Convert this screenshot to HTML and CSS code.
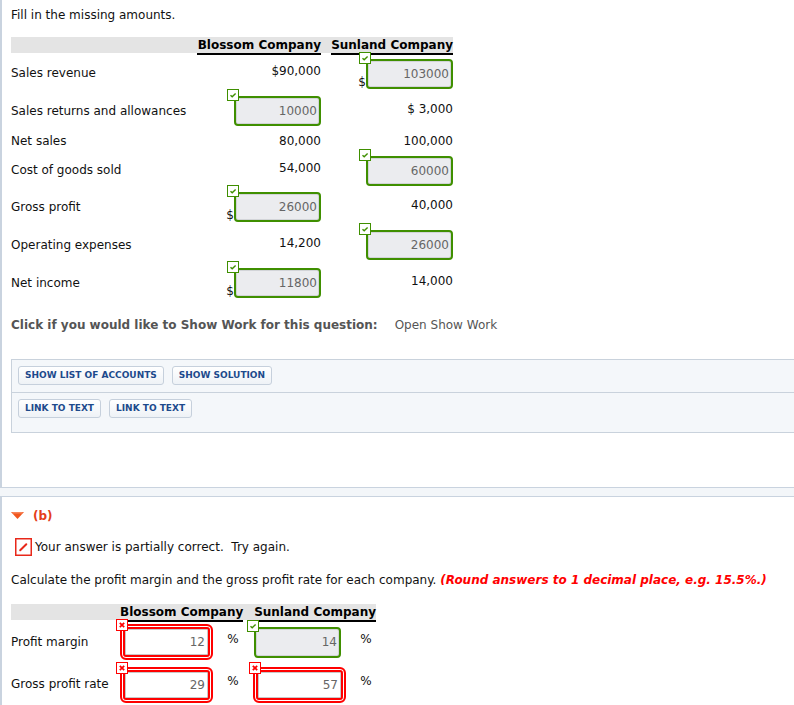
FILE: index.html
```html
<!DOCTYPE html>
<html>
<head>
<meta charset="utf-8">
<title>Fill in the missing amounts</title>
<link rel="stylesheet" href="styles.css">
</head>
<body>
<div class="part part-a">
  <p class="intro">Fill in the missing amounts.</p>

  <div class="ta-head">
    <span></span>
    <span class="co">Blossom Company</span>
    <span class="co">Sunland Company</span>
  </div>

  <div class="ta">
    <div class="lbl">Sales revenue</div>
    <div class="val up">$90,000</div>
    <div class="cell"><span class="dollar">$</span><span class="box ok">103000<i class="mark mark-ok"><svg viewBox="0 0 12 12" width="12" height="12"><rect x="0.5" y="0.5" width="11" height="11" fill="#fff" stroke="#3f8f00"/><path d="M3.5 6.2 L5.2 7.8 L8.6 4.4" fill="none" stroke="#3f8f00" stroke-width="1.4"/></svg></i></span></div>

    <div class="lbl">Sales returns and allowances</div>
    <div class="cell"><span class="box ok">10000<i class="mark mark-ok"><svg viewBox="0 0 12 12" width="12" height="12"><rect x="0.5" y="0.5" width="11" height="11" fill="#fff" stroke="#3f8f00"/><path d="M3.5 6.2 L5.2 7.8 L8.6 4.4" fill="none" stroke="#3f8f00" stroke-width="1.4"/></svg></i></span></div>
    <div class="val up">$ 3,000</div>

    <div class="lbl">Net sales</div>
    <div class="val">80,000</div>
    <div class="val">100,000</div>

    <div class="lbl">Cost of goods sold</div>
    <div class="val up">54,000</div>
    <div class="cell"><span class="box ok">60000<i class="mark mark-ok"><svg viewBox="0 0 12 12" width="12" height="12"><rect x="0.5" y="0.5" width="11" height="11" fill="#fff" stroke="#3f8f00"/><path d="M3.5 6.2 L5.2 7.8 L8.6 4.4" fill="none" stroke="#3f8f00" stroke-width="1.4"/></svg></i></span></div>

    <div class="lbl">Gross profit</div>
    <div class="cell"><span class="dollar">$</span><span class="box ok">26000<i class="mark mark-ok"><svg viewBox="0 0 12 12" width="12" height="12"><rect x="0.5" y="0.5" width="11" height="11" fill="#fff" stroke="#3f8f00"/><path d="M3.5 6.2 L5.2 7.8 L8.6 4.4" fill="none" stroke="#3f8f00" stroke-width="1.4"/></svg></i></span></div>
    <div class="val up">40,000</div>

    <div class="lbl">Operating expenses</div>
    <div class="val up">14,200</div>
    <div class="cell"><span class="box ok">26000<i class="mark mark-ok"><svg viewBox="0 0 12 12" width="12" height="12"><rect x="0.5" y="0.5" width="11" height="11" fill="#fff" stroke="#3f8f00"/><path d="M3.5 6.2 L5.2 7.8 L8.6 4.4" fill="none" stroke="#3f8f00" stroke-width="1.4"/></svg></i></span></div>

    <div class="lbl">Net income</div>
    <div class="cell"><span class="dollar">$</span><span class="box ok">11800<i class="mark mark-ok"><svg viewBox="0 0 12 12" width="12" height="12"><rect x="0.5" y="0.5" width="11" height="11" fill="#fff" stroke="#3f8f00"/><path d="M3.5 6.2 L5.2 7.8 L8.6 4.4" fill="none" stroke="#3f8f00" stroke-width="1.4"/></svg></i></span></div>
    <div class="val up">14,000</div>
  </div>

  <p class="showwork"><b>Click if you would like to Show Work for this question:</b><span class="open">Open Show Work</span></p>

  <div class="panel">
    <div class="prow">
      <span class="btn">SHOW LIST OF ACCOUNTS</span>
      <span class="btn">SHOW SOLUTION</span>
    </div>
    <div class="prow prow-2">
      <span class="btn">LINK TO TEXT</span>
      <span class="btn">LINK TO TEXT</span>
    </div>
  </div>
</div>

<div class="strip"></div>

<div class="part part-b">
  <div class="bhead">
    <svg class="tri" viewBox="0 0 13 8" width="13" height="8"><polygon points="0,0 13,0 6.5,7" fill="#f0561f"/><polygon points="1,0 12,0 11,1.5 2,1.5" fill="#f7855a"/></svg>
    <span class="blabel">(b)</span>
  </div>

  <div class="partial">
    <svg class="pico" viewBox="0 0 17 18" width="17" height="18"><rect x="0.75" y="0.75" width="15.5" height="16.5" fill="#fff" stroke="#e8281a" stroke-width="1.5"/><path d="M5.2 12.3 L11.3 6.2" stroke="#e8281a" stroke-width="2" stroke-linecap="round"/></svg>
    <span>Your answer is partially correct.&nbsp; Try again.</span>
  </div>

  <p class="calc">Calculate the profit margin and the gross profit rate for each company. <b class="hint">(Round answers to 1 decimal place, e.g. 15.5%.)</b></p>

  <div class="tb-head">
    <span></span>
    <span class="co">Blossom Company</span>
    <span></span>
    <span class="co">Sunland Company</span>
  </div>

  <div class="tb">
    <div class="lbl">Profit margin</div>
    <div class="bcell"><span class="box bad">12<i class="mark mark-bad"><svg viewBox="0 0 12 12" width="12" height="12"><rect x="0.5" y="0.5" width="11" height="11" fill="#fff" stroke="#f00"/><path d="M3.8 3.8 L8.2 8.2 M8.2 3.8 L3.8 8.2" stroke="#f00" stroke-width="1.7"/></svg></i></span></div>
    <div class="pct">%</div>
    <div></div>
    <div class="bcell"><span class="box ok okb">14<i class="mark mark-ok"><svg viewBox="0 0 12 12" width="12" height="12"><rect x="0.5" y="0.5" width="11" height="11" fill="#fff" stroke="#3f8f00"/><path d="M3.5 6.2 L5.2 7.8 L8.6 4.4" fill="none" stroke="#3f8f00" stroke-width="1.4"/></svg></i></span></div>
    <div class="pct">%</div>

    <div class="lbl">Gross profit rate</div>
    <div class="bcell"><span class="box bad">29<i class="mark mark-bad"><svg viewBox="0 0 12 12" width="12" height="12"><rect x="0.5" y="0.5" width="11" height="11" fill="#fff" stroke="#f00"/><path d="M3.8 3.8 L8.2 8.2 M8.2 3.8 L3.8 8.2" stroke="#f00" stroke-width="1.7"/></svg></i></span></div>
    <div class="pct">%</div>
    <div></div>
    <div class="bcell"><span class="box bad">57<i class="mark mark-bad"><svg viewBox="0 0 12 12" width="12" height="12"><rect x="0.5" y="0.5" width="11" height="11" fill="#fff" stroke="#f00"/><path d="M3.8 3.8 L8.2 8.2 M8.2 3.8 L3.8 8.2" stroke="#f00" stroke-width="1.7"/></svg></i></span></div>
    <div class="pct">%</div>
  </div>
</div>
</body>
</html>
```

FILE: styles.css
```css
* { box-sizing: border-box; }

html, body {
  margin: 0;
  padding: 0;
  background: #fff;
}

body {
  font-family: "DejaVu Sans", Verdana, sans-serif;
  font-size: 12px;
  color: #111;
  line-height: 15px;
}

p { margin: 0; }

.part {
  border-left: 2px solid #c9d3df;
  padding-left: 9px;
  overflow: hidden;
}

.part-a {
  padding-top: 8px;
  padding-bottom: 54px;
}

.intro {
  line-height: 15px;
  margin-bottom: 14px;
}

/* ---------- part A table ---------- */
.ta-head,
.ta {
  display: grid;
  grid-template-columns: 186px 124px 10px 122px;
  width: 442px;
}

.ta-head {
  background: linear-gradient(#e4e4e4 16px, transparent 16px);
  height: 18px;
}

.ta-head .co:last-child { grid-column: 4; }

.co {
  font-weight: bold;
  text-align: right;
  line-height: 16px;
  border-bottom: 2px solid #000;
  white-space: nowrap;
  color: #000;
}

.ta {
  grid-template-rows: 37px 38px 23px 35px 38px 38px 38px;
}

.ta > :nth-child(3n) { grid-column: 4; }

.lbl {
  align-self: center;
  white-space: nowrap;
}

.val {
  align-self: center;
  text-align: right;
  white-space: nowrap;
}

.up { padding-bottom: 4px; }

.cell {
  align-self: center;
  display: flex;
  justify-content: flex-end;
  align-items: flex-end;
}

.dollar {
  line-height: 14px;
}

.box {
  position: relative;
  display: block;
  width: 87px;
  height: 30px;
  border: 2px solid #3f8f00;
  border-radius: 4px;
  background: #ebecef;
  box-shadow: inset 0 0 0 1px #d2d4d8;
  color: #666;
  text-align: right;
  line-height: 26px;
  padding-right: 2px;
}

.mark {
  position: absolute;
  left: -9px;
  top: -9px;
  width: 12px;
  height: 12px;
  line-height: 0;
}

.mark svg { display: block; }

/* ---------- show work ---------- */
.showwork {
  margin-top: 15px;
  line-height: 16px;
  color: #555;
  white-space: nowrap;
}

.showwork b { color: #555; }

.open {
  margin-left: 17px;
  color: #555;
}

.panel {
  margin-top: 26px;
  margin-right: -20px;
  border: 1px solid #c9d2dc;
  background: #f4f7fa;
}

.prow {
  display: flex;
  gap: 8px;
  padding: 6px 6px 7px;
}

.prow-2 {
  border-top: 1px solid #c9d2dc;
  padding-bottom: 14px;
}

.btn {
  display: block;
  height: 19px;
  line-height: 17px;
  padding: 0 6px;
  border: 1px solid #c6d0dc;
  border-radius: 3px;
  background: linear-gradient(#ffffff, #eef2f6);
  color: #1d4a8c;
  font-size: 9px;
  font-weight: bold;
  white-space: nowrap;
}

/* ---------- strip ---------- */
.strip {
  height: 10px;
  border-top: 1px solid #c9d3df;
  border-bottom: 1px solid #c9d3df;
  background: #f3f6f9;
}

/* ---------- part B ---------- */
.part-b {
  padding-top: 11px;
  padding-bottom: 30px;
}

.bhead {
  display: flex;
  align-items: center;
  height: 16px;
}

.tri { display: block; margin-right: 9px; }

.blabel {
  font-weight: bold;
  color: #e43d1a;
}

.partial {
  margin-top: 14px;
  display: flex;
  align-items: center;
  height: 18px;
}

.pico {
  display: block;
  margin-left: 4px;
  margin-right: 3px;
}

.calc {
  margin-top: 16px;
  line-height: 16px;
  white-space: nowrap;
}

.hint {
  color: #f00;
  font-style: italic;
}

.tb-head,
.tb {
  display: grid;
  width: 365px;
}

.tb-head {
  margin-top: 16px;
  grid-template-columns: 109px 123px 10px 123px;
  background: linear-gradient(#e4e4e4 16px, transparent 16px);
  height: 18px;
}

.tb {
  grid-template-columns: 109px 103px 20px 10px 103px 20px;
  grid-template-rows: 40px 45px;
}

.bcell {
  align-self: center;
  display: flex;
}

.box.bad {
  width: 93px;
  height: 36px;
  border: 2px solid #f00;
  border-radius: 6px;
  background: #fff;
  box-shadow: inset 0 0 0 1px #fff, inset 0 0 0 3px #f00, inset 0 0 0 4px #c8c8c8;
  line-height: 32px;
  padding-right: 6px;
}

.box.okb {
  width: 87px;
  height: 31px;
  margin-left: 1px;
  line-height: 27px;
}

.mark-ok {
  left: -9px;
  top: -9px;
}

.mark-bad {
  left: -6px;
  top: -7px;
}

.pct {
  align-self: center;
  text-align: center;
  padding-bottom: 6px;
}
```
